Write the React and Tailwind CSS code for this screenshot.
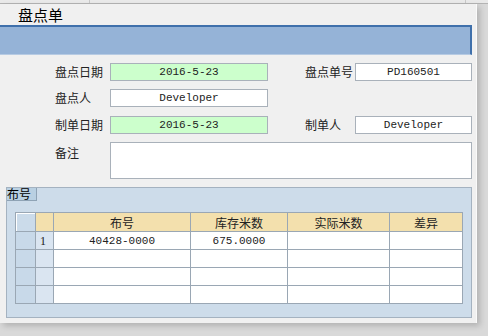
import React from "react";

const cjk = "font-['Noto_Sans_CJK_SC','Noto_Sans',sans-serif]";
const mono = "font-['Liberation_Mono','Noto_Sans_CJK_SC',monospace]";

const Field = ({ value, green, className = "" }) => (
  <div
    className={`h-[18px] border border-[#a9b1ba] flex items-center justify-center text-[11px] text-[#222] ${mono} ${
      green ? "bg-[#ccffcc]" : "bg-white"
    } ${className}`}
  >
    {value}
  </div>
);

const Label = ({ children, className = "" }) => (
  <span className={`text-[12px] leading-[18px] text-[#222] ${cjk} ${className}`}>{children}</span>
);

const rows = [
  { no: "1", code: "40428-0000", stock: "675.0000", real: "", diff: "" },
  { no: "", code: "", stock: "", real: "", diff: "" },
  { no: "", code: "", stock: "", real: "", diff: "" },
  { no: "", code: "", stock: "", real: "", diff: "" },
];

const App = () => {
  return (
    <div className="w-[488px] h-[336px] bg-[#d9d9d9] overflow-hidden flex flex-col">
      {/* top strip */}
      <div className="h-[4px] bg-[#e9e9e9] border-b border-[#b4b4b4] flex shrink-0">
        <div className="w-[90px] border-r border-[#c8c8c8]" />
        <div className="w-[376px] border-r border-[#c8c8c8]" />
      </div>

      <div className="w-[477px] h-[319px] bg-[#f0f0f0] border-r border-[#fafafa] shadow-[3px_3px_6px_rgba(0,0,0,0.18)] flex flex-col shrink-0">
        {/* title */}
        <div className={`h-[21px] pl-[18px] text-[15px] leading-[21px] text-black ${cjk}`}>盘点单</div>

        {/* blue band */}
        <div className="w-[472px] h-[30px] bg-[#95b3d7] border-t-2 border-r-2 border-[#3f70ab] border-b border-b-[#b7cbe3]" />

        {/* form */}
        <div className="flex flex-col pl-[55px] pt-[8px]">
          <div className="flex items-center h-[18px]">
            <Label className="w-[55px]">盘点日期</Label>
            <Field value="2016-5-23" green className="w-[158px]" />
            <Label className="ml-[37px] w-[50px]">盘点单号</Label>
            <Field value="PD160501" className="w-[117px]" />
          </div>
          <div className="flex items-center h-[18px] mt-[8px]">
            <Label className="w-[55px]">盘点人</Label>
            <Field value="Developer" className="w-[158px]" />
          </div>
          <div className="flex items-center h-[18px] mt-[9px]">
            <Label className="w-[55px]">制单日期</Label>
            <Field value="2016-5-23" green className="w-[158px]" />
            <Label className="ml-[37px] w-[50px]">制单人</Label>
            <Field value="Developer" className="w-[117px]" />
          </div>
          <div className="flex items-start h-[37px] mt-[8px]">
            <Label className="w-[55px] pt-[2px]">备注</Label>
            <div className="w-[362px] h-[37px] bg-white border border-[#a9b1ba]" />
          </div>
        </div>

        {/* group box */}
        <div className="ml-[6px] mt-[8px] w-[466px] h-[131px] bg-[#cddcea] border border-[#a4b2c0] flex flex-col">
          <div className={`w-[30px] h-[13px] bg-[#b9d0e2] border-r border-b border-[#8fa3b5] text-[12px] leading-[12px] text-black ${cjk}`}>
            布号
          </div>
          <table className="ml-[8px] mt-[11px] border-collapse table-fixed w-[447px]">
            <colgroup>
              <col className="w-[20px]" />
              <col className="w-[18px]" />
              <col className="w-[137px]" />
              <col className="w-[97px]" />
              <col className="w-[102px]" />
              <col className="w-[73px]" />
            </colgroup>
            <thead>
              <tr className={`h-[19px] text-[12px] text-[#222] ${cjk}`}>
                <th className="bg-[#cbdbea] border border-[#9aa7b4] shadow-[inset_1px_1px_0_#fff]" />
                <th className="bg-[#f3e0ad] border border-[#9aa7b4]" />
                <th className="bg-[#f3e0ad] border border-[#9aa7b4] font-normal leading-[17px]">布号</th>
                <th className="bg-[#f3e0ad] border border-[#9aa7b4] font-normal leading-[17px]">库存米数</th>
                <th className="bg-[#f3e0ad] border border-[#9aa7b4] font-normal leading-[17px]">实际米数</th>
                <th className="bg-[#f3e0ad] border border-[#9aa7b4] font-normal leading-[17px]">差异</th>
              </tr>
            </thead>
            <tbody>
              {rows.map((r, i) => (
                <tr key={i} className="h-[18px] text-[11px] text-[#222]">
                  <td className="bg-[#c8d9e9] border border-[#9aa7b4]" />
                  <td className="bg-[#dae5f1] border border-[#9aa7b4] pl-[4px] text-[12px] font-['Liberation_Serif',serif] leading-[16px]">
                    {r.no}
                  </td>
                  <td className={`bg-white border border-[#9aa7b4] text-center leading-[16px] ${mono}`}>{r.code}</td>
                  <td className={`bg-white border border-[#9aa7b4] text-center leading-[16px] ${mono}`}>{r.stock}</td>
                  <td className={`bg-white border border-[#9aa7b4] text-center leading-[16px] ${mono}`}>{r.real}</td>
                  <td className={`bg-white border border-[#9aa7b4] text-center leading-[16px] ${mono}`}>{r.diff}</td>
                </tr>
              ))}
            </tbody>
          </table>
        </div>
      </div>
    </div>
  );
};

export default App;
